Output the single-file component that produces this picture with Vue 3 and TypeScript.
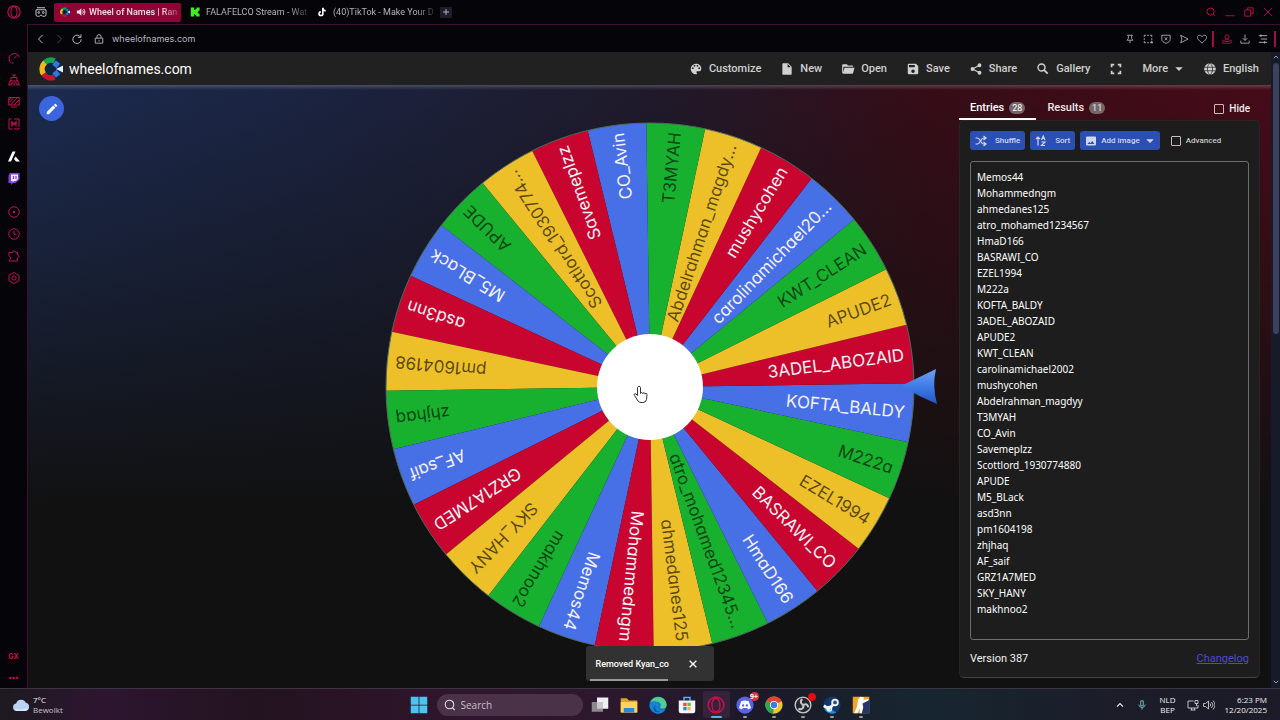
<script setup lang="ts">
import { h, ref } from 'vue'

interface Part { d: string; f?: string; s?: string; w?: number }

const fill = (d: string, f = 'currentColor'): Part => ({ d, f })
const line = (d: string, w = 2, s = 'currentColor'): Part => ({ d, s, w })
const disc = (cx: number, cy: number, r: number) =>
  `M${cx - r} ${cy}a${r} ${r} 0 1 0 ${2 * r} 0a${r} ${r} 0 1 0 ${-2 * r} 0z`

const icons: Record<string, Part[]> = {
  opera: [line(disc(12, 12, 10.5), 2), line('M12 3c-7 0-7 18 0 18s7-18 0-18z', 1.8)],
  workspace: [line('M4 3.500h16M2 7.500h20v10a3 3 0 0 1-3 3h-4l-3-3-3 3H5a3 3 0 0 1-3-3z', 2), line(disc(7.5, 13, 1.8)), line(disc(16.5, 13, 1.8))],
  logo: [
    fill(disc(12, 12, 12), '#08263f'),
    line('M6 5.5A9 9 0 0 1 15.5 3.9', 5.5, '#17a34a'),
    line('M4.6 17A9 9 0 0 1 6 5.5', 5.5, '#efb81e'),
    line('M15.5 20.1A9 9 0 0 1 4.6 17', 5.5, '#d0102f'),
    line('M19 5l-3.500 4.500M19 19l-3.500-4.500', 5.5, '#3f6fe0'),
    fill('M17 12l7-3.5v7z', '#e8f0ff'),
  ],
  speaker: [fill('M2 8.5h5l6-5.5v18l-6-5.5H2z'), line('M16 8a6 6 0 0 1 0 8M18 4.5a10 10 0 0 1 0 15', 2.4)],
  kick: [fill('M2 1h8v6h3V4h3V1h7v8h-3v3h-2v1h2v3h3v7h-8v-3h-3v-3h-2v6H2z', '#3df21a')],
  tiktok: [fill('M12 2h4c.3 3 2 4.800 5 5v4c-2 0-3.600-.6-5-1.500V16a6.500 6.500 0 1 1-7-6.500v4a2.600 2.600 0 1 0 3 2.500z', '#fff')],
  plus: [line('M12 3v18M3 12h18', 3)],
  search: [line(disc(11, 11, 8.5), 2.2), line('M16.500 17l5 5', 2.2)],
  minimize: [line('M1 21h22', 2.2)],
  restore: [line('M2 7h14v15H2zM8 7V2h14v14h-6', 2.2)],
  close: [line('M2 2l20 20M22 2L2 22', 2)],
  back: [line('M16 2L6 12l10 10', 2.4)],
  forward: [line('M8 2l10 10L8 22', 2.4)],
  reload: [line('M20.500 7.500A10 10 0 1 0 22 13M21.500 1v7H14', 2.4)],
  lock: [line('M3 10h18v12H3zM7 10V6.500a5 5 0 0 1 10 0V10M12 14v4', 2.2)],
  pin: [line('M5 3h14M8 3v8l-3 4h14l-3-4V3M12 15v7', 2)],
  snap: [line('M3 7V3h4M10 3h4M17 3h4v4M21 10v4M3 10v4M3 17v4h4M10 21h4M21 16v7M17 20h7', 2.2)],
  shield: [line('M2 3h20v10c0 5-4 7-10 9.500C6 20 2 18 2 13zM9 8l6 7M15 8l-6 7', 2)],
  send: [line('M4 3l18 9-18 9 3-9z', 2)],
  heart: [line('M12 22C4 15 1 11.500 1 8 1 2 9 1 12 6.500 15 1 23 2 23 8c0 3.500-3 7-11 14z', 2)],
  user: [line(disc(12, 7, 5), 2), line('M2 22v-7h5l3-3h4l3 3h5v7zM6 18h12', 2)],
  download: [line('M12 1v14M6.500 10l5.500 5.500 5.500-5.500M2 16v6h20v-6', 2)],
  menu: [line('M2 4h20M7 12h15M2 20h20M7 1v6M16 17v6', 2.2)],
  gauge: [line('M6.500 22A10.500 10.500 0 1 1 22.500 10M12 13l6-6M7 22h4', 2)],
  robot: [line('M6 14V7h12v7M12 7V2M8 2h8M3 14h18M5 14l-4 8h5l1-4h10l1 4h5l-4-8M9 22h6', 2)],
  panel: [line('M1.500 3h21v15h-21zM6 22h12M2 13L12 3M5 18L19 3M12 18L22 8M2 8l5-5', 2)],
  mods: [line('M7 2H2v20h7M12 2h10v16M22 20v2H12', 2), line('M8 17V8l4 5 4-5v9', 2.600)],
  a: [fill('M9 1h6l-9 20H0zM15 11l9 10h-8l-4-5z', '#fff')],
  twitch: [fill('M4 0L1 5v15h5v4l4-4h5l8-7V0z', '#7b45d8'), fill('M6 3h14v9l-4 4h-4l-3 3v-3H6z', '#efe6ff'), line('M11 6v6M16 6v6', 2.400, '#7b45d8')],
  player: [line(disc(12, 12, 10.5)), fill(disc(12, 12, 2.400))],
  clock: [line(disc(12, 12, 10.5)), line('M12 5v7l5 2')],
  puzzle: [line('M2 5h7a3 3 0 1 1 6 0h4v5a3 3 0 1 1 0 6v6H2l4-6-4-5z', 2)],
  gear: [line('M12 1l5 3 5 2.500v11L12 23l-10-5.500v-11L7 4z', 2), line(disc(12, 12, 4.2))],
  palette: [fill('M17.500,12A1.500,1.500 0 0,1 16,10.500A1.500,1.500 0 0,1 17.500,9A1.500,1.500 0 0,1 19,10.500A1.500,1.500 0 0,1 17.500,12M14.500,8A1.500,1.500 0 0,1 13,6.500A1.500,1.500 0 0,1 14.500,5A1.500,1.500 0 0,1 16,6.500A1.500,1.500 0 0,1 14.500,8M9.500,8A1.500,1.500 0 0,1 8,6.500A1.500,1.500 0 0,1 9.500,5A1.500,1.500 0 0,1 11,6.500A1.500,1.500 0 0,1 9.500,8M6.500,12A1.500,1.500 0 0,1 5,10.500A1.500,1.500 0 0,1 6.500,9A1.500,1.500 0 0,1 8,10.500A1.500,1.500 0 0,1 6.500,12M12,3A9,9 0 0,0 3,12A9,9 0 0,0 12,21A1.500,1.500 0 0,0 13.500,19.500C13.500,19.110 13.350,18.760 13.110,18.500C12.880,18.230 12.730,17.880 12.730,17.500A1.500,1.500 0 0,1 14.230,16H16A5,5 0 0,0 21,11C21,6.580 16.970,3 12,3Z')],
  file: [fill('M13,9V3.500L18.500,9M6,2C4.890,2 4,2.890 4,4V20A2,2 0 0,0 6,22H18A2,2 0 0,0 20,20V8L14,2H6Z')],
  folder: [fill('M19,20H4C2.890,20 2,19.100 2,18V6C2,4.890 2.890,4 4,4H10L12,6H19A2,2 0 0,1 21,8L4,8V18L6.140,10H23.210L20.930,18.500C20.700,19.370 19.920,20 19,20Z')],
  save: [fill('M15,9H5V5H15M12,19A3,3 0 0,1 9,16A3,3 0 0,1 12,13A3,3 0 0,1 15,16A3,3 0 0,1 12,19M17,3H5C3.890,3 3,3.900 3,5V19A2,2 0 0,0 5,21H19A2,2 0 0,0 21,19V7L17,3Z')],
  share: [fill(disc(18, 5.500, 3.300)), fill(disc(6, 12, 3.300)), fill(disc(18, 18.500, 3.300)), line('M18 5.500L6 12l12 6.500', 2)],
  magnify: [line(disc(9.500, 9.500, 6), 2.400), line('M14 14l6 6', 3)],
  full: [fill('M3,3H9V6H6V9H3V3M15,3H21V9H18V6H15V3M18,15H21V21H15V18H18V15M9,18V21H3V15H6V18H9Z')],
  caret: [fill('M3 8h18l-9 9z')],
  globe: [fill(disc(12, 12, 10)), line('M12 2c-6 5-6 15 0 20M12 2c6 5 6 15 0 20M2 9h20M2 15h20', 1.300, '#212121')],
  pencil: [fill('M20.710,7.040C21.100,6.650 21.100,6 20.710,5.630L18.370,3.290C18,2.900 17.350,2.900 16.960,3.290L15.120,5.120L18.870,8.870M3,17.250V21H6.750L17.810,9.930L14.060,6.180L3,17.250Z')],
  shuffle: [line('M1 6h4c5 0 7 12 12 12h3M1 18h4c5 0 7-12 12-12h3M17 2l5 4-5 4M17 14l5 4-5 4', 2.400)],
  sort: [line('M6 21V4M2 8l4-4 4 4M13 10l3.500-8L20 10M14 7h5M13 14h7l-7 7h7', 2.400)],
  image: [fill('M8.500,13.500L11,16.500L14.500,12L19,18H5M22,19V5C22,3.890 21.100,3 20,3H4A2,2 0 0,0 2,5V19A2,2 0 0,0 4,21H20A2,2 0 0,0 22,19Z')],
  windows: [fill('M1 1h10.500v10.500H1zM12.500 1H23v10.500H12.500zM1 12.500h10.500V23H1zM12.500 12.500H23V23H12.500z', '#4cc4f0')],
  taskview: [fill('M8 2h15v15H8z', '#f1eef2'), fill('M1 8h15v13H1z', '#8d8792'), fill('M8 8h8v9H8z', '#c9c5cc')],
  explorer: [fill('M1 3h8l3 3h11v16H1z', '#e0a526'), fill('M1 8h22v14H1z', '#ffd25a'), fill('M5 16h14v6H5z', '#2389d8')],
  edge: [fill(disc(12, 12, 11.500), '#1876c8'), fill('M2 8C6-2 23-1 23.500 12c0 5-7 6-9 3 4-5-2-9-12.500-7z', '#4fd08a'), fill('M1 11c2-5 11-5 13 0-3 1-3 5 0 8 3 1 6 0 8-1-5 8-18 7-21-3z', '#1683d8'), fill('M9 12c-3 4 1 9 6 9-8 3-12-5-6-9z', '#0c4f9b')],
  store: [line('M8 6V2h8v4', 2, '#4db3e8'), fill('M1 6h22v14a3 3 0 0 1-3 3H4a3 3 0 0 1-3-3z', '#f4f5f8'), fill('M7 9h4.500v4.500H7z', '#f05030'), fill('M12.500 9H17v4.500h-4.500z', '#6cbb3c'), fill('M7 14.500h4.500V19H7z', '#1d8fe0'), fill('M12.500 14.500H17V19h-4.500z', '#f7b92a')],
  discord: [fill(disc(12, 12, 11.500), '#5763e8'), fill('M7 7q5-2 10 0l3 9-4 2-1-2H9l-1 2-4-2z', '#fff'), fill(disc(9.500, 12.500, 1.600), '#5763e8'), fill(disc(14.500, 12.500, 1.600), '#5763e8')],
  chrome: [fill(disc(12, 12, 11.500), '#f0c52d'), fill('M12 12L2 6.300A11.500 11.500 0 0 1 22.300 7z', '#de4536'), fill('M12 12L2 6.300A11.500 11.500 0 0 0 11 23.500z', '#2fa552'), fill(disc(12, 12, 5.500), '#fff'), fill(disc(12, 12, 4.300), '#3a7de8')],
  obs: [fill(disc(12, 12, 11), '#25262b'), line(disc(12, 12, 10.500), 1.800, '#c8c8cc'), line('M11 4c-4 4-1 8 3 8M19 15c-1-5-6-5-8-1M6 17c5 2 8-2 6-6', 2.600, '#c8c8cc')],
  steam: [fill(disc(12, 12, 11.500), '#14386b'), fill('M2 14l7 3 9 5A11.500 11.500 0 0 1 2 18z', '#1e8ac8'), line('M1 13l7 4 8-8', 3.500, '#f2f5f8'), fill(disc(16, 8.500, 5), '#f2f5f8'), fill(disc(16, 8.500, 2.500), '#2d4a75'), line(disc(8.500, 17, 3), 1.800, '#f2f5f8')],
  shooter: [fill('M1 1h22v22H1z', '#f0a52a'), fill('M14 5h9v18H12z', '#26356d'), fill('M11 1l5 1-1 3 7-1v2l-8 4 1 5-2 8h-3l1-7-4 7H3l4-10 1-8z', '#fff')],
  cloud: [fill('M6 20a5 5 0 0 1-.5-9.900A7 7 0 0 1 18.500 9 5.600 5.600 0 0 1 18 20z', '#b9d2f3'), fill('M4 17q8 3 17-1-1 4-4 4H6q-2-1-2-3z', '#dde9fa')],
  up: [line('M3 17l9-9 9 9', 3.4)],
  down: [line('M3 7l9 9 9-9', 3.4)],
  mic: [line('M9 2h6v12H9zM4.500 11c0 9 15 9 15 0M12 18v5', 2.400)],
  network: [line('M13 4H2v14h20v-6M7 22h10M9 18v4M15 18v4M16 3h6v6h-6zM19 9v5', 1.900)],
  volume: [line('M1 9h4l6-5v16l-6-5H1zM14 9q3 3 0 6M17 6q6 6 0 12M20 3q8 9 0 18', 1.800)],
}

const Ico = (p: { name: string }) =>
  h('svg', { viewBox: '0 0 24 24', 'aria-hidden': 'true' },
    icons[p.name].map(i => h('path', {
      d: i.d, fill: i.f ?? 'none', stroke: i.s ?? 'none', 'stroke-width': i.w, 'fill-rule': 'evenodd',
    })))

const entries = ref([
  'Memos44', 'Mohammedngm', 'ahmedanes125', 'atro_mohamed1234567', 'HmaD166', 'BASRAWI_CO', 'EZEL1994',
  'M222a', 'KOFTA_BALDY', '3ADEL_ABOZAID', 'APUDE2', 'KWT_CLEAN', 'carolinamichael2002', 'mushycohen',
  'Abdelrahman_magdyy', 'T3MYAH', 'CO_Avin', 'Savemeplzz', 'Scottlord_1930774880', 'APUDE', 'M5_BLack',
  'asd3nn', 'pm1604198', 'zhjhaq', 'AF_saif', 'GRZ1A7MED', 'SKY_HANY', 'makhnoo2',
].join('\n'))

const R = 264
const START = -0.8
const winner = 8
const palette = ['#4870e6', '#c8052f', '#edbf28', '#17b12f']

const names = entries.value.split('\n')
const step = 360 / names.length
const point = (deg: number) => {
  const a = (deg * Math.PI) / 180
  return `${(R * Math.cos(a)).toFixed(2)} ${(R * Math.sin(a)).toFixed(2)}`
}
const slices = names.map((name, i) => {
  const from = START + (winner - i) * step
  const k = i % 4
  return {
    label: name.length > 17 ? name.slice(0, 17) + '...' : name,
    d: `M0 0L${point(from)}A${R} ${R} 0 0 1 ${point(from + step)}Z`,
    mid: from + step / 2,
    color: palette[k],
    dark: k > 1,
  }
})

const tabs = [
  { icon: 'logo', title: 'Wheel of Names | Ran', sound: true, active: true },
  { icon: 'kick', title: 'FALAFELCO Stream - Wat' },
  { icon: 'tiktok', title: '(40)TikTok - Make Your D' },
]
const sidebar = [
  ['gauge', 'robot', 'panel', 'mods'],
  ['a', 'twitch'],
  ['player', 'clock', 'puzzle', 'gear'],
]
const menu = [
  { icon: 'palette', text: 'Customize' }, { icon: 'file', text: 'New' }, { icon: 'folder', text: 'Open' },
  { icon: 'save', text: 'Save' }, { icon: 'share', text: 'Share' }, { icon: 'magnify', text: 'Gallery' },
  { icon: 'full', text: '' }, { icon: '', text: 'More', caret: true }, { icon: 'globe', text: 'English' },
]
const apps = [
  { icon: 'taskview' }, { icon: 'explorer' }, { icon: 'edge' }, { icon: 'store' },
  { icon: 'opera', active: true, open: true }, { icon: 'discord', open: true, badge: '9+' },
  { icon: 'chrome', open: true }, { icon: 'obs', open: true, rec: true },
  { icon: 'steam', open: true }, { icon: 'shooter', open: true },
]
</script>

<template>
  <div class="desktop">
    <div class="browser">
      <header class="tabstrip">
        <button class="opera" aria-label="Opera menu"><Ico name="opera" class="i14" /></button>
        <button class="work" aria-label="Workspaces"><Ico name="workspace" class="i12" /></button>
        <button v-for="t in tabs" :key="t.title" class="tab" :class="{ active: t.active }">
          <Ico :name="t.icon" class="i10" />
          <Ico v-if="t.sound" name="speaker" class="i10 sound" />
          <span class="tab-title">{{ t.title }}</span>
        </button>
        <button class="add" aria-label="New tab"><Ico name="plus" class="i8" /></button>
        <div class="controls">
          <button v-for="c in ['search', 'minimize', 'restore', 'close']" :key="c" :aria-label="c"><Ico :name="c" class="i10" /></button>
        </div>
      </header>

      <div class="body">
        <nav class="side">
          <div v-for="(g, i) in sidebar" :key="i" class="side-group">
            <button v-for="s in g" :key="s" :aria-label="s"><Ico :name="s" class="i12" /></button>
          </div>
          <div class="side-end">
            <button class="gx">GX</button>
            <button class="gx">•••</button>
          </div>
        </nav>

        <main class="main">
          <div class="address">
            <button aria-label="Back"><Ico name="back" class="i10" /></button>
            <button class="dim" aria-label="Forward"><Ico name="forward" class="i10" /></button>
            <button aria-label="Reload"><Ico name="reload" class="i10" /></button>
            <Ico name="lock" class="i10" />
            <span class="url">wheelofnames.com</span>
            <div class="tools">
              <button v-for="c in ['pin', 'snap', 'shield', 'send', 'heart']" :key="c" :aria-label="c"><Ico :name="c" class="i10" /></button>
              <i class="bar"></i>
              <button class="pink" aria-label="Profile"><Ico name="user" class="i10" /></button>
              <button aria-label="Downloads"><Ico name="download" class="i10" /></button>
              <button aria-label="Setup"><Ico name="menu" class="i10" /></button>
              <i class="bar"></i>
            </div>
          </div>

          <div class="view">
            <div class="site">
              <div class="site-head">
                <Ico name="logo" class="i24" />
                <a class="brand" href="#">wheelofnames.com</a>
                <nav class="menu">
                  <button v-for="m in menu" :key="m.icon + m.text" :aria-label="m.text || 'Fullscreen'">
                    <Ico v-if="m.icon" :name="m.icon" class="i14" />
                    <span v-if="m.text">{{ m.text }}</span>
                    <Ico v-if="m.caret" name="caret" class="i10" />
                  </button>
                </nav>
              </div>

              <div class="stage">
                <div class="left">
                  <button class="edit" aria-label="Edit title"><Ico name="pencil" class="i14" /></button>
                </div>

                <svg class="wheel" viewBox="-265 -265 530 530" role="img" aria-label="Wheel of names">
                  <defs>
                    <linearGradient id="pointer" x1="0" y1="0" x2="0" y2="1">
                      <stop offset="0" stop-color="#6ba0f2" />
                      <stop offset="0.5" stop-color="#3f7ce6" />
                      <stop offset="1" stop-color="#2355c6" />
                    </linearGradient>
                  </defs>
                  <path v-for="s in slices" :key="s.label" :d="s.d" :fill="s.color" />
                  <circle r="264" class="rim" />
                  <text v-for="s in slices" :key="s.label" class="name" :class="{ dark: s.dark }"
                    x="256" text-anchor="end" dominant-baseline="central" :transform="`rotate(${s.mid})`">{{ s.label }}</text>
                  <circle r="53" fill="#fff" />
                  <path d="M251 -1L286 -18Q282 -1 287 17Q268 9 251 -1Z" fill="url(#pointer)" />
                  <path class="hand" d="M-12.500 0.500v8l-1.500-1.500c-1.500-1-2.500 0.500-1.500 1.500l3.500 5.500q1 1.500 3 1.500h2q3 0 3.500-3l0.500-5c0-1.500-1.800-1.700-2-0.300 0-1.700-2-1.900-2.200-0.500-0.100-1.500-2.200-1.500-2.300-0.200v-6c-0.200-1.600-2.700-1.600-3 0z" />
                </svg>

                <aside class="right">
                  <div class="ptabs">
                    <button class="ptab on">Entries <span class="badge">28</span></button>
                    <button class="ptab">Results <span class="badge">11</span></button>
                    <label class="check hide"><input type="checkbox">Hide</label>
                  </div>
                  <section class="panel">
                    <div class="actions">
                      <button class="act"><Ico name="shuffle" class="i12" /><span class="wide">Shuffle</span></button>
                      <button class="act"><Ico name="sort" class="i12" /><span class="wide">Sort</span></button>
                      <button class="act"><Ico name="image" class="i12" />Add image<Ico name="caret" class="i10 drop" /></button>
                      <label class="check adv"><input type="checkbox">Advanced</label>
                    </div>
                    <textarea v-model="entries" aria-label="Entries" spellcheck="false"></textarea>
                    <div class="foot"><span>Version 387</span><a href="#">Changelog</a></div>
                  </section>
                </aside>

                <div class="toast" role="status">
                  <span>Removed Kyan_co</span>
                  <button aria-label="Dismiss"><Ico name="close" class="i8 thick" /></button>
                  <i class="progress"></i>
                </div>
              </div>
            </div>
            <div class="scroll"><Ico name="up" class="i6" /><i class="thumb"></i><Ico name="down" class="i6" /></div>
          </div>
        </main>
      </div>
    </div>

    <footer class="taskbar">
      <button class="weather">
        <Ico name="cloud" class="i18" />
        <span>7°C<br><em>Bewolkt</em></span>
      </button>
      <div class="dock">
        <button class="app" aria-label="Start"><Ico name="windows" class="i18" /></button>
        <label class="find"><Ico name="search" class="i12" /><input type="text" placeholder="Search" aria-label="Search"></label>
        <button v-for="a in apps" :key="a.icon" class="app" :class="{ active: a.active, open: a.open, red: a.icon === 'opera' }" :aria-label="a.icon">
          <Ico :name="a.icon" class="i18" />
          <b v-if="a.badge" class="dot">{{ a.badge }}</b>
          <b v-if="a.rec" class="rec"></b>
        </button>
      </div>
      <div class="tray">
        <Ico name="up" class="i8" />
        <Ico name="mic" class="i10 teal" />
        <span class="lang">NLD<br>BEP</span>
        <span class="pair"><Ico name="network" class="i12" /><Ico name="volume" class="i12" /></span>
        <span class="time">6:23 PM<br>12/20/2025</span>
      </div>
    </footer>
  </div>
</template>

<style>
html, body { background: #050509; }
</style>

<style scoped>
* { box-sizing: border-box; }
button { background: none; border: 0; padding: 0; margin: 0; color: inherit; font: inherit; display: flex; align-items: center; justify-content: center; }
svg { display: block; flex: none; }
.i6 { width: 6px; height: 6px; }
.i8 { width: 8px; height: 8px; }
.i10 { width: 10px; height: 10px; }
.i12 { width: 12px; height: 12px; }
.i14 { width: 14px; height: 14px; }
.i18 { width: 18px; height: 18px; }
.i24 { width: 24px; height: 24px; }

.desktop { min-height: 100vh; display: grid; grid-template-rows: 1fr 32px; background: #050509; color: #e6e6e6; font-family: Roboto, "Liberation Sans", sans-serif; font-size: 11px; }
.browser { display: flex; flex-direction: column; min-width: 0; }

.tabstrip { height: 24px; display: flex; align-items: center; font-size: 9px; color: #b4b2bd; }
.opera { width: 28px; color: #c3104a; }
.work { width: 26px; color: #c4c3cc; }
.tab { width: 127px; height: 19px; padding: 0 3px 0 6px; gap: 6px; justify-content: flex-start; border-radius: 2px; }
.tab + .tab { padding-left: 9px; }
.tab.active { background: #8f0434; color: #f3dfe7; font-weight: 500; }
.sound { margin-right: -3px; }
.tab-title { white-space: nowrap; mask-image: linear-gradient(90deg, #000 82%, rgba(0, 0, 0, 0.25)); }
.add { width: 12px; height: 11px; margin-left: 5px; background: #1e1d2a; border-radius: 1px; }
.controls { margin-left: auto; padding-right: 7px; display: flex; gap: 9px; color: #c01048; }

.body { flex: 1; display: grid; grid-template-columns: 28px 1fr; }
.side { border-right: 1px solid #3d1030; color: #c4124b; display: flex; flex-direction: column; align-items: center; gap: 21px; padding-top: 28px; }
.side-group { display: flex; flex-direction: column; gap: 10px; }
.side-end { margin-top: auto; padding-bottom: 5px; display: flex; flex-direction: column; align-items: center; gap: 11px; }
.gx { font: 700 7px/10px Inter, sans-serif; }

.main { display: flex; flex-direction: column; min-width: 0; border-top: 1px solid #3d1030; }
.address { height: 27px; display: flex; align-items: center; gap: 8px; padding: 0 4px 0 8px; color: #b7b6c0; }
.dim { color: #4b4a54; }
.address > .i10 { margin-left: 4px; }
.url { font: 9px Inter, sans-serif; }
.tools { margin-left: auto; display: flex; align-items: center; gap: 6px; }
.tools .i10, .controls .i10 { width: 12px; height: 12px; padding: 1px; box-sizing: border-box; }
.controls { gap: 7px; padding-right: 6px; }
.bar { width: 2px; height: 16px; background: #a30e40; margin: 0 1px 0 -2px; }
.tools .bar:last-child { margin: 0 0 0 -1px; }
.pink { color: #c01048; }

.view { flex: 1; display: grid; grid-template-columns: 1fr 9px; }
.site { display: flex; flex-direction: column; min-width: 0; }
.site-head { height: 33px; background: #212121; display: flex; align-items: center; padding: 0 12px 0 11px; }
.brand { color: #fff; text-decoration: none; font-size: 14px; margin-left: 6px; }
.menu { margin-left: auto; display: flex; gap: 19px; color: #d0d0d0; font-weight: 500; }
.menu button { gap: 6px; }

.stage {
  flex: 1; position: relative; display: grid; grid-template-columns: 1fr 530px 1fr; align-items: center;
  background:
    linear-gradient(rgba(255, 255, 255, 0.2), transparent) top / 100% 5px no-repeat,
    linear-gradient(rgba(17, 17, 17, 0), rgba(17, 17, 17, 0.4) 30%, #111 70%),
    linear-gradient(90deg, #1c2b50, #1b2340 24%, #1f1a2b 50%, #360d17 72%, #460b18);
}
.left { align-self: start; padding: 11px; }
.edit { width: 25px; height: 25px; border-radius: 50%; background: #3b66e0; color: #fff; }
.wheel { width: 100%; overflow: visible; }
.rim { fill: none; stroke: #4d6a5c; stroke-width: 1; }
.name { font: 400 17px Inter, sans-serif; font-feature-settings: "cv11"; fill: #f4f1f8; }
.name.dark { fill: rgba(0, 0, 0, 0.64); }
.hand { fill: #fff; stroke: #333; stroke-width: 1; }

.right { align-self: stretch; justify-self: end; width: 301px; margin-right: 11px; padding: 12px 0 10px; display: flex; flex-direction: column; }
.ptabs { height: 23px; display: flex; align-items: stretch; padding-right: 10px; font-weight: 500; color: #f0e6e8; }
.ptab { padding: 0 11px; gap: 5px; border-bottom: 2px solid transparent; }
.ptab.on { border-color: #fff; color: #fff; }
.badge { font-size: 9px; line-height: 12px; font-weight: 400; background: #75666a; border-radius: 6px; padding: 0 3px; }
.check { display: flex; align-items: center; gap: 5px; color: #ececec; }
.check input { appearance: none; width: 10px; height: 10px; margin: 0; border: 1px solid #c9b9bd; border-radius: 1px; }
.hide { margin-left: auto; font-size: 10px; }
.panel { flex: 1; display: flex; flex-direction: column; background: #1d1d1d; border: 1px solid #2b2426; border-bottom-color: #444; border-radius: 5px; padding: 10px 10px 0; }
.actions { display: flex; gap: 5px; font-size: 8px; font-weight: 500; }
.act { height: 19px; padding: 0 5px; gap: 4px; background: #2c4fb5; color: #cfd8f2; border-radius: 3px; white-space: nowrap; }
.wide { margin-left: 4px; }
.drop { margin-left: 1px; }
.adv { margin-left: 6px; color: #c9c9c9; }
textarea { flex: 1; margin-top: 11px; resize: none; overflow: hidden; background: transparent; border: 1px solid #6d6d6d; border-radius: 3px; padding: 7px 6px; color: #fff; font: 10px/16px "Noto Sans", "Open Sans", sans-serif; outline: 0; }
.foot { height: 37px; display: flex; align-items: center; justify-content: space-between; color: #f3f3f3; }
.foot a { color: #5049cf; }

.toast { position: absolute; left: 50%; bottom: 7px; width: 128px; height: 35px; margin-left: -64px; background: #323232; border-radius: 3px; display: flex; align-items: center; padding: 0 17px 0 10px; justify-content: space-between; font-size: 9px; font-weight: 500; color: #fff; }
.thick { stroke-width: 4; }
.thick :deep(path) { stroke-width: 4; }
.progress { position: absolute; left: 4px; bottom: 0; width: 61%; height: 2px; background: #9a9a9a; }

.scroll { background: #171a29; display: flex; flex-direction: column; align-items: center; gap: 3px; padding: 2px 0 3px; color: #b8b8c4; }
.thumb { width: 6px; height: 43%; background: #3c4160; border-radius: 3px; margin-bottom: auto; }

.taskbar {
  border-top: 1px solid #3b3640; display: grid; grid-template-columns: 1fr auto 1fr; align-items: stretch;
  background: linear-gradient(90deg, #1d1a20, #2d1530 8%, #23131f 20%, #30152d 36%, #2c182d 48%, #1b1a28 60%, #162630 72%, #1b1d29 86%, #1c1b27);
  font-family: "Open Sans", "Noto Sans", sans-serif; font-size: 8px; line-height: 10px; color: #f0f0f0;
}
.weather { justify-self: start; padding-left: 12px; gap: 3px; text-align: left; }
em { font-style: normal; color: #c6c1c8; }
.dock { display: flex; align-items: center; gap: 2px; }
.app { position: relative; width: 27px; height: 27px; border-radius: 2px; }
.app.active { background: #34233a; }
.red { color: #c8104c; }
.app.open::after { content: ""; position: absolute; bottom: 0; width: 4px; height: 2px; border-radius: 1px; background: #9a9aa2; }
.app.active::after { width: 11px; background: #57b4de; }
.dot { position: absolute; top: 1px; right: 0; min-width: 9px; height: 9px; border-radius: 5px; background: #d8343f; color: #fff; font-size: 7px; line-height: 9px; }
.rec { position: absolute; top: 2px; right: 1px; width: 8px; height: 8px; border-radius: 50%; background: #e00d0d; }
.find { width: 146px; height: 22px; border-radius: 11px; background: #4a3249; display: flex; align-items: center; gap: 5px; padding: 0 7px; margin: 0 2px; color: #ddd; }
.find input { flex: 1; min-width: 0; border: 0; padding: 0; background: none; outline: 0; color: #ddd; font: 10px "Open Sans", sans-serif; }
.find input::placeholder { color: #c9bfcb; }
.tray { justify-self: end; display: flex; align-items: center; gap: 13px; padding-right: 13px; text-align: center; }
.teal { color: #6fb8b4; }
.pair { display: flex; gap: 4px; color: #c8c8cc; margin-left: -2px; }
.time { text-align: right; margin-left: -3px; }
</style>
